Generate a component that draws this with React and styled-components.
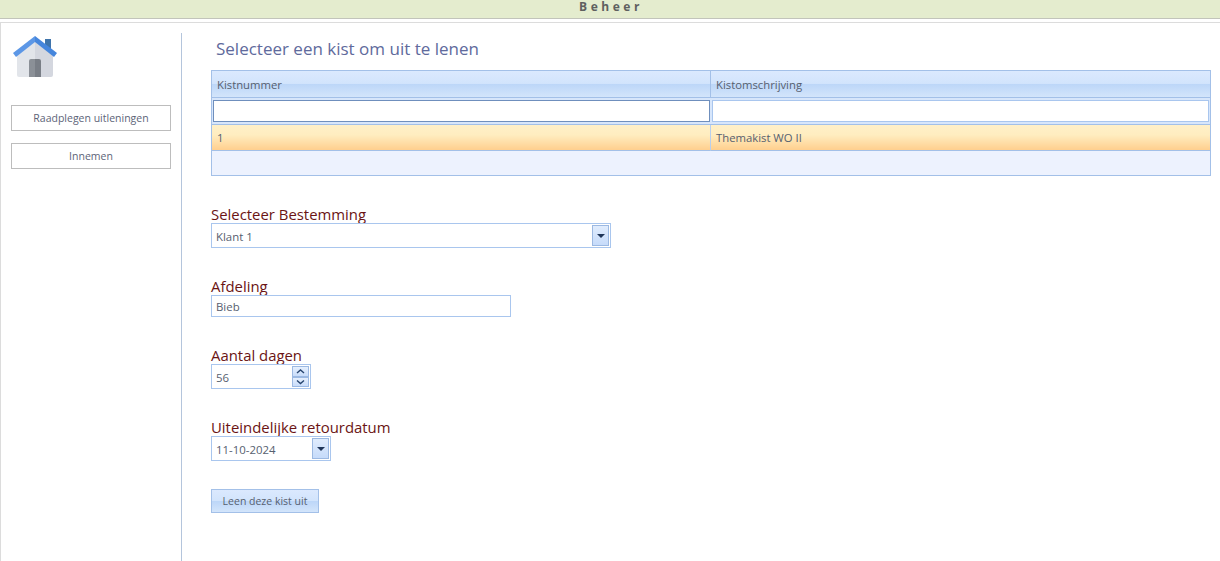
import React from "react"
import styled, { createGlobalStyle } from "styled-components"

const GlobalStyle = createGlobalStyle`
  html, body {
    margin: 0;
    height: 100%;
    overflow: hidden;
    background: #fff;
    font-family: "Open Sans", "Liberation Sans", sans-serif;
  }
  * {
    box-sizing: border-box;
  }
`

const App = () => {
    return (
    <>
        <GlobalStyle />
        <TopBar>Beheer</TopBar>
        <Page>
            <Sidebar>
                <HomeIcon />
                <NavButton>Raadplegen uitleningen</NavButton>
                <NavButton>Innemen</NavButton>
            </Sidebar>
            <Main>
                <Title>Selecteer een kist om uit te lenen</Title>
                <Grid>
                    <HeadCell>Kistnummer</HeadCell>
                    <HeadCell $last>Kistomschrijving</HeadCell>
                    <FilterCell><FilterInput $focused /></FilterCell>
                    <FilterCell $last><FilterInput /></FilterCell>
                    <RowCell>1</RowCell>
                    <RowCell $last>Themakist WO II</RowCell>
                    <EmptyRow />
                </Grid>
                <Form>
                    <Field>
                        <Label>Selecteer Bestemming</Label>
                        <Control $width={400}>
                            <Value>Klant 1</Value>
                            <DropButton><Arrow /></DropButton>
                        </Control>
                    </Field>
                    <Field>
                        <Label>Afdeling</Label>
                        <Control $width={300} $height={22}>
                            <Value>Bieb</Value>
                        </Control>
                    </Field>
                    <Field>
                        <Label>Aantal dagen</Label>
                        <Control $width={100}>
                            <Value>56</Value>
                            <Spinner>
                                <SpinButton><Chevron d="M1 5l3.5-3 3.5 3" /></SpinButton>
                                <SpinButton><Chevron d="M1 1.5l3.5 3 3.5-3" /></SpinButton>
                            </Spinner>
                        </Control>
                    </Field>
                    <Field>
                        <Label>Uiteindelijke retourdatum</Label>
                        <Control $width={120}>
                            <Value>11-10-2024</Value>
                            <DropButton><Arrow /></DropButton>
                        </Control>
                    </Field>
                    <SubmitButton>Leen deze kist uit</SubmitButton>
                </Form>
            </Main>
        </Page>
    </>
    )
}

const HomeIcon = () => (
    <HomeSvg viewBox="13 36 44 41" aria-hidden="true">
        <rect x="45" y="39" width="6" height="10" fill="#3f74ab" />
        <path d="M17 52L35 38v39H19a2 2 0 0 1-2-2z" fill="#e2e5ea" />
        <path d="M35 38l18 14v23a2 2 0 0 1-2 2H35z" fill="#d4d7df" />
        <path d="M29 77V61a2 2 0 0 1 2-2h4v18z" fill="#8b9097" />
        <path d="M35 59h4a2 2 0 0 1 2 2v16h-6z" fill="#797e86" />
        <path d="M13 53l22-17v6L16 57z" fill="#5c97e6" />
        <path d="M57 53L35 36v6l19 15z" fill="#4686dc" />
    </HomeSvg>
)

const Arrow = () => (
    <svg width="8" height="4" viewBox="0 0 8 4" aria-hidden="true">
        <path d="M0 0h8L4 4z" fill="#1f3559" />
    </svg>
)

const Chevron = ({ d }) => (
    <svg width="9" height="6" viewBox="0 0 9 6" aria-hidden="true">
        <path d={d} fill="none" stroke="#27456f" strokeWidth="1.400" />
    </svg>
)

const TopBar = styled.div`
  height: 19px;
  margin-bottom: 3px;
  padding-left: 2px;
  background: #e4ecce;
  border-bottom: 1px solid #c2c4bb;
  color: #5f5f5f;
  font-size: 12px;
  font-weight: 700;
  line-height: 13px;
  letter-spacing: 3.55px;
  text-align: center;
`
const Page = styled.div`
  display: flex;
  height: 539px;
  border-top: 1px solid #dcdcdc;
  border-left: 1px solid #dcdcdc;
`
const Sidebar = styled.aside`
  display: flex;
  flex-direction: column;
  flex: 0 0 181px;
  height: 528px;
  margin-top: 10px;
  padding: 3px 0 0 10px;
  border-right: 1px solid #b4c5dc;
`
const HomeSvg = styled.svg`
  display: block;
  width: 44px;
  height: 41px;
  margin: 0 0 28px 2px;
`
const NavButton = styled.button`
  width: 160px;
  height: 26px;
  margin-bottom: 12px;
  padding: 0;
  background: #fff;
  border: 1px solid #bdbdbd;
  color: #5d6478;
  font: 10.500px "Open Sans", sans-serif;
`
const Main = styled.main`
  flex: 0 0 1000px;
  margin-left: 29px;
`
const Title = styled.h1`
  height: 47px;
  margin: 0;
  padding: 14px 0 0 5px;
  color: #606a9c;
  font-size: 17px;
  font-weight: 400;
  line-height: 23px;
`
const Grid = styled.div`
  display: grid;
  grid-template-columns: 499px 1fr;
  grid-template-rows: 27px 27px 26px 24px;
  height: 106px;
  border: 1px solid #a3c0e8;
  color: #56606f;
  font-size: 11.300px;
`
const HeadCell = styled.div`
  display: flex;
  align-items: center;
  padding-left: 5px;
  background: linear-gradient(#dbe9fe 0%, #d2e4fc 48%, #bcd6f8 50%, #d3e5fb 100%);
  border-bottom: 1px solid #a3c0e8;
  border-right: ${(props) => (props.$last ? "none" : "1px solid #a3c0e8")};
`
const FilterCell = styled.div`
  padding: 2px 1px;
  background: #d7e6fb;
  border-bottom: 1px solid #a3c0e8;
`
const FilterInput = styled.input`
  display: block;
  width: 100%;
  height: 22px;
  background: #fff;
  border: 1px solid ${(props) => (props.$focused ? "#6f8fbd" : "#a9c6ee")};
  outline: none;
`
const RowCell = styled.div`
  display: flex;
  align-items: center;
  padding-left: 5px;
  background: linear-gradient(#fff0c8 0%, #ffedc0 40%, #ffcf8e 100%);
  border-bottom: 1px solid #a3c0e8;
  border-right: ${(props) => (props.$last ? "none" : "1px solid #b8cfee")};
`
const EmptyRow = styled.div`
  grid-column: 1 / 3;
  background: #edf2fe;
`
const Form = styled.form`
  display: flex;
  flex-direction: column;
  align-items: flex-start;
  gap: 31px;
  padding-top: 31px;
`
const Field = styled.div`
  display: flex;
  flex-direction: column;
  align-items: flex-start;
`
const Label = styled.label`
  height: 16px;
  color: #6b1414;
  font-size: 14.900px;
  line-height: 14px;
  white-space: nowrap;
`
const Control = styled.div`
  display: flex;
  align-items: center;
  justify-content: space-between;
  width: ${(props) => props.$width}px;
  height: ${(props) => props.$height || 25}px;
  padding: 1px 1px 1px 4px;
  background: #fff;
  border: 1px solid #a9c6ee;
  color: #56606f;
  font-size: 11.400px;
`
const Value = styled.span`
  margin-top: 2px;
  line-height: 14px;
`
const DropButton = styled.span`
  display: flex;
  align-items: center;
  justify-content: center;
  width: 17px;
  height: 21px;
  background: linear-gradient(#e0ecfd, #c6dbfa);
  border: 1px solid #9cb9e2;
`
const Spinner = styled.span`
  display: flex;
  flex-direction: column;
  width: 17px;
  height: 21px;
`
const SpinButton = styled.span`
  display: flex;
  align-items: center;
  justify-content: center;
  flex: 1;
  background: linear-gradient(#e6f0fe, #c8dcfa);
  border: 1px solid #9cb9e2;
`
const SubmitButton = styled.button`
  width: 108px;
  height: 24px;
  margin-top: -3px;
  padding: 0;
  background: linear-gradient(#dbe9fe 0%, #d2e4fc 48%, #bcd6f8 50%, #d3e5fb 100%);
  border: 1px solid #a3c0e8;
  color: #56606f;
  font: 10.500px "Open Sans", sans-serif;
`

export default App
